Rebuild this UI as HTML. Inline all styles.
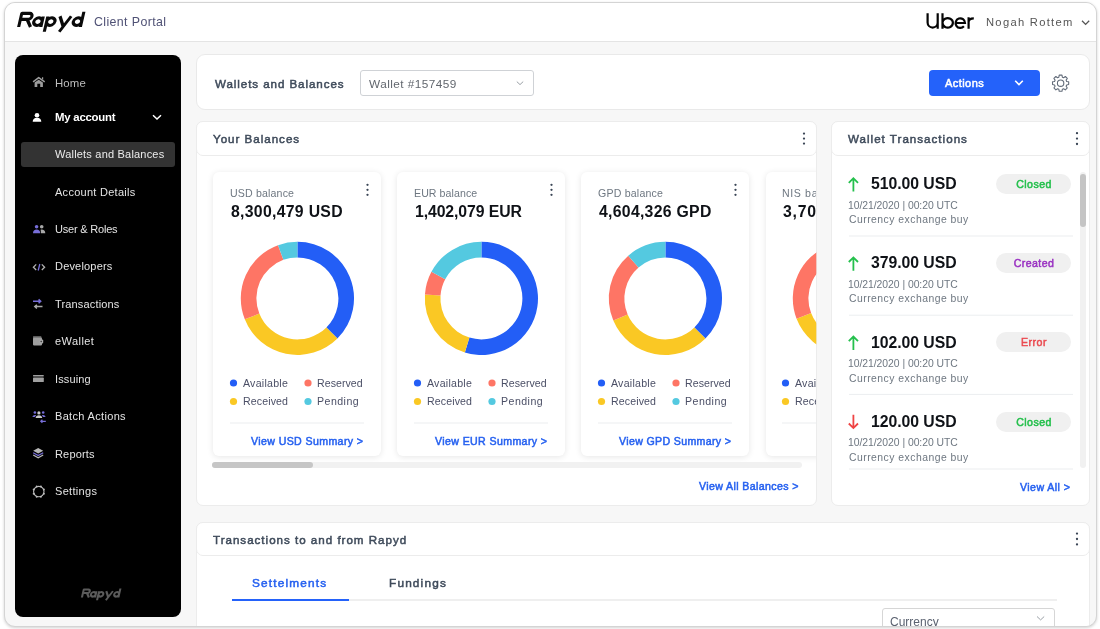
<!DOCTYPE html>
<html><head><meta charset="utf-8">
<style>
html,body{margin:0;padding:0;width:1100px;height:629px;overflow:hidden;background:#fff;font-family:"Liberation Sans",sans-serif}
.frame{position:absolute;left:4px;top:2px;width:1091px;height:623px;border:1px solid #d4d4d4;border-radius:11px;box-shadow:0 1px 3px rgba(0,0,0,.18);overflow:hidden;background:#f7f7f7}
.inner{position:absolute;left:-5px;top:-3px;width:1100px;height:629px}
.t{position:absolute;white-space:nowrap;line-height:1;will-change:transform}
.b{position:absolute;box-sizing:border-box}
svg{position:absolute;left:0;top:0;overflow:visible}
</style></head><body>
<div class="frame"><div class="inner">
<!-- header -->
<div class="b" style="left:0;top:0;width:1100px;height:42px;background:#fff;border-bottom:1px solid #e4e4e4"></div>
<!-- sidebar -->
<div class="b" style="left:15.2px;top:55.2px;width:166.2px;height:561.8px;background:#000;border-radius:8px"></div>
<div class="b" style="left:21px;top:142px;width:154px;height:25px;background:#333;border-radius:3px"></div>
<!-- wallets bar -->
<div class="b" style="left:196px;top:54px;width:894px;height:56px;background:#fff;border:1px solid #e9e9e9;border-radius:9px"></div>
<div class="b" style="left:360px;top:70px;width:174px;height:26px;background:#fff;border:1px solid #cfd2d6;border-radius:3px"></div>
<div class="b" style="left:929px;top:70px;width:111px;height:26px;background:#2462fa;border-radius:4px"></div>
<!-- your balances -->
<div class="b" style="left:196px;top:121px;width:621px;height:385px;background:#fff;border:1px solid #ececec;border-radius:7px"></div>
<div class="b" style="left:196px;top:121px;width:621px;height:35px;background:#fff;border:1px solid #ececec;border-radius:7px"></div>
<!-- balance cards clip -->
<div class="b" style="left:197px;top:160px;width:619px;height:320px;overflow:hidden">
  <div class="b" style="left:15.5px;top:12px;width:168px;height:283.6px;background:#fff;border-radius:6px;box-shadow:0 1px 6px rgba(0,0,0,.1)"></div>
  <div class="b" style="left:199.9px;top:12px;width:168px;height:283.6px;background:#fff;border-radius:6px;box-shadow:0 1px 6px rgba(0,0,0,.1)"></div>
  <div class="b" style="left:384.3px;top:12px;width:168px;height:283.6px;background:#fff;border-radius:6px;box-shadow:0 1px 6px rgba(0,0,0,.1)"></div>
  <div class="b" style="left:568.7px;top:12px;width:168px;height:283.6px;background:#fff;border-radius:6px;box-shadow:0 1px 6px rgba(0,0,0,.1)"></div>
</div>
<div class="b" style="left:212px;top:462px;width:590px;height:6px;background:#f1f1f1;border-radius:3px"></div>
<div class="b" style="left:212px;top:462px;width:100.5px;height:6px;background:#c6c6c6;border-radius:3px"></div>
<!-- wallet transactions -->
<div class="b" style="left:831px;top:121px;width:259px;height:385px;background:#fff;border:1px solid #ececec;border-radius:7px"></div>
<div class="b" style="left:831px;top:121px;width:259px;height:35px;background:#fff;border:1px solid #ececec;border-radius:7px"></div>
<div class="b" style="left:1079.8px;top:172px;width:6px;height:296px;background:#f1f1f1;border-radius:3px"></div>
<div class="b" style="left:1079.8px;top:173.5px;width:6px;height:53px;background:#c4c4c4;border-radius:3px"></div>
<div class="b" style="left:996px;top:174px;width:75px;height:20px;background:#f0f0f0;border-radius:10px"></div>
<div class="b" style="left:996px;top:253.2px;width:75px;height:20px;background:#f0f0f0;border-radius:10px"></div>
<div class="b" style="left:996px;top:332.4px;width:75px;height:20px;background:#f0f0f0;border-radius:10px"></div>
<div class="b" style="left:996px;top:411.6px;width:75px;height:20px;background:#f0f0f0;border-radius:10px"></div>
<!-- bottom panel -->
<div class="b" style="left:196px;top:522px;width:894px;height:120px;background:#fff;border:1px solid #ececec;border-radius:7px"></div>
<div class="b" style="left:196px;top:522px;width:894px;height:34px;background:#fff;border:1px solid #ececec;border-radius:7px"></div>
<div class="b" style="left:232px;top:599px;width:825px;height:2px;background:#efefef"></div>
<div class="b" style="left:232px;top:598.6px;width:117px;height:2.4px;background:#2462fa"></div>
<div class="b" style="left:882px;top:608px;width:173px;height:30px;background:#fff;border:1px solid #d6d6d6;border-radius:3px"></div>

<svg width="1100" height="629" viewBox="0 0 1100 629"><defs><clipPath id="nisclip"><rect x="0" y="0" width="816.3" height="629"/></clipPath></defs>
<path d="M297.40 241.80A56.6 56.6 0 0 1 337.42 338.42L326.39 327.39A41.0 41.0 0 0 0 297.40 257.40Z" fill="#235ef6"/><path d="M337.42 338.42A56.6 56.6 0 0 1 244.81 319.33L259.31 313.56A41.0 41.0 0 0 0 326.39 327.39Z" fill="#fac824"/><path d="M244.81 319.33A56.6 56.6 0 0 1 278.04 245.21L283.38 259.87A41.0 41.0 0 0 0 259.31 313.56Z" fill="#fe7565"/><path d="M278.04 245.21A56.6 56.6 0 0 1 297.40 241.80L297.40 257.40A41.0 41.0 0 0 0 283.38 259.87Z" fill="#54c9e0"/><path d="M481.40 241.80A56.6 56.6 0 1 1 464.85 352.53L469.41 337.61A41.0 41.0 0 1 0 481.40 257.40Z" fill="#235ef6"/><path d="M464.85 352.53A56.6 56.6 0 0 1 424.94 294.45L440.50 295.54A41.0 41.0 0 0 0 469.41 337.61Z" fill="#fac824"/><path d="M424.94 294.45A56.6 56.6 0 0 1 431.43 271.83L445.20 279.15A41.0 41.0 0 0 0 440.50 295.54Z" fill="#fe7565"/><path d="M431.43 271.83A56.6 56.6 0 0 1 481.40 241.80L481.40 257.40A41.0 41.0 0 0 0 445.20 279.15Z" fill="#54c9e0"/><path d="M665.40 241.80A56.6 56.6 0 0 1 705.42 338.42L694.39 327.39A41.0 41.0 0 0 0 665.40 257.40Z" fill="#235ef6"/><path d="M705.42 338.42A56.6 56.6 0 0 1 613.30 320.52L627.66 314.42A41.0 41.0 0 0 0 694.39 327.39Z" fill="#fac824"/><path d="M613.30 320.52A56.6 56.6 0 0 1 628.27 255.68L638.50 267.46A41.0 41.0 0 0 0 627.66 314.42Z" fill="#fe7565"/><path d="M628.27 255.68A56.6 56.6 0 0 1 665.40 241.80L665.40 257.40A41.0 41.0 0 0 0 638.50 267.46Z" fill="#54c9e0"/><g clip-path="url(#nisclip)"><path d="M849.40 241.80A56.6 56.6 0 0 1 889.42 338.42L878.39 327.39A41.0 41.0 0 0 0 849.40 257.40Z" fill="#235ef6"/><path d="M889.42 338.42A56.6 56.6 0 0 1 796.56 318.68L811.12 313.09A41.0 41.0 0 0 0 878.39 327.39Z" fill="#fac824"/><path d="M796.56 318.68A56.6 56.6 0 0 1 830.04 245.21L835.38 259.87A41.0 41.0 0 0 0 811.12 313.09Z" fill="#fe7565"/><path d="M830.04 245.21A56.6 56.6 0 0 1 849.40 241.80L849.40 257.40A41.0 41.0 0 0 0 835.38 259.87Z" fill="#54c9e0"/><circle cx="785.50" cy="383" r="3.6" fill="#235ef6"/><circle cx="860.00" cy="383" r="3.6" fill="#fe7565"/><circle cx="785.50" cy="401.5" r="3.6" fill="#fac824"/><circle cx="860.00" cy="401.5" r="3.6" fill="#54c9e0"/><rect x="782" y="422.5" width="134" height="1" fill="#eceef0"/></g>
<!-- separators -->
<g fill="#eceef0">
<rect x="230" y="422.5" width="134" height="1"/><rect x="414" y="422.5" width="134" height="1"/><rect x="598" y="422.5" width="134" height="1"/>
<rect x="849" y="235.5" width="224" height="1"/><rect x="849" y="314.7" width="224" height="1"/><rect x="849" y="393.9" width="224" height="1"/><rect x="849" y="468.5" width="224" height="1"/>
</g>
<!-- legend dots -->
<g>
<circle cx="233.50" cy="383" r="3.6" fill="#235ef6"/><circle cx="308.00" cy="383" r="3.6" fill="#fe7565"/><circle cx="233.50" cy="401.5" r="3.6" fill="#fac824"/><circle cx="308.00" cy="401.5" r="3.6" fill="#54c9e0"/><circle cx="417.50" cy="383" r="3.6" fill="#235ef6"/><circle cx="492.00" cy="383" r="3.6" fill="#fe7565"/><circle cx="417.50" cy="401.5" r="3.6" fill="#fac824"/><circle cx="492.00" cy="401.5" r="3.6" fill="#54c9e0"/><circle cx="601.50" cy="383" r="3.6" fill="#235ef6"/><circle cx="676.00" cy="383" r="3.6" fill="#fe7565"/><circle cx="601.50" cy="401.5" r="3.6" fill="#fac824"/><circle cx="676.00" cy="401.5" r="3.6" fill="#54c9e0"/>
</g>
<!-- kebabs -->
<g fill="#3b4656">
<circle cx="367.5" cy="184.80" r="1.15"/><circle cx="367.5" cy="189.80" r="1.15"/><circle cx="367.5" cy="194.80" r="1.15"/><circle cx="551.5" cy="184.80" r="1.15"/><circle cx="551.5" cy="189.80" r="1.15"/><circle cx="551.5" cy="194.80" r="1.15"/><circle cx="735.5" cy="184.80" r="1.15"/><circle cx="735.5" cy="189.80" r="1.15"/><circle cx="735.5" cy="194.80" r="1.15"/><circle cx="804" cy="133.60" r="1.15"/><circle cx="804" cy="138.60" r="1.15"/><circle cx="804" cy="143.60" r="1.15"/><circle cx="1077" cy="133.20" r="1.15"/><circle cx="1077" cy="138.60" r="1.15"/><circle cx="1077" cy="144.00" r="1.15"/><circle cx="1077" cy="533.60" r="1.15"/><circle cx="1077" cy="539.00" r="1.15"/><circle cx="1077" cy="544.40" r="1.15"/>
</g>
<!-- header chevron -->
<path d="M1082 20.8l3.6 3.6 3.6-3.6" fill="none" stroke="#555" stroke-width="1.3"/>
<!-- sidebar chevron -->
<path d="M153 115.2l4 3.8 4-3.8" fill="none" stroke="#fff" stroke-width="1.5"/>
<!-- select chevron -->
<path d="M516.8 81.6l3.2 3 3.2-3" fill="none" stroke="#9aa0a6" stroke-width="1"/>
<!-- actions chevron -->
<path d="M1015.2 80.8l3.8 3.8 3.8-3.8" fill="none" stroke="#fff" stroke-width="1.6"/>
<!-- currency chevron -->
<path d="M1037 616.5l3.6 3.4 3.6-3.4" fill="none" stroke="#9aa0a6" stroke-width="1"/>
<!-- gear -->
<g transform="translate(1060.6 83.2)" fill="none" stroke="#636c7a" stroke-width="1.1" stroke-linejoin="round">
<path d="M-1.76 -6.05L-1.38 -8.08L1.38 -8.08L1.76 -6.05L3.04 -5.52L4.74 -6.69L6.69 -4.74L5.52 -3.04L6.05 -1.76L8.08 -1.38L8.08 1.38L6.05 1.76L5.52 3.04L6.69 4.74L4.74 6.69L3.04 5.52L1.76 6.05L1.38 8.08L-1.38 8.08L-1.76 6.05L-3.04 5.52L-4.74 6.69L-6.69 4.74L-5.52 3.04L-6.05 1.76L-8.08 1.38L-8.08 -1.38L-6.05 -1.76L-5.52 -3.04L-6.69 -4.74L-4.74 -6.69L-3.04 -5.52Z"/>
<circle r="3.2"/>
</g>
<!-- tx arrows -->
<g fill="none" stroke-width="1.8" stroke-linecap="butt">
<path d="M853.4 191.5V178.2M848.8 182.8l4.6-4.6 4.6 4.6" stroke="#25c04d"/>
<path d="M853.4 270.7V257.4M848.8 262l4.6-4.6 4.6 4.6" stroke="#25c04d"/>
<path d="M853.4 349.9V336.6M848.8 341.2l4.6-4.6 4.6 4.6" stroke="#25c04d"/>
<path d="M853.4 414.8V428.1M848.8 423.5l4.6 4.6 4.6-4.6" stroke="#ef4444"/>
</g>
<!-- sidebar icons -->
<!-- home -->
<path d="M33.1 81.8L38.7 77.6L44.7 81.8" fill="none" stroke="#9c9c9c" stroke-width="1.5" stroke-linejoin="round"/><path d="M42 77.2h1.2v2.6l-1.2-.9z" fill="#9c9c9c"/><path d="M34.6 87.1V82.6L38.7 79.7L42.9 82.6V87.1H40.2V83.8H37.3V87.1Z" fill="#9c9c9c"/>
<!-- person -->
<circle cx="37" cy="115.3" r="2.3" fill="#fff"/>
<path d="M32.7 121.8c0-2.6 1.8-4 4.3-4s4.3 1.4 4.3 4z" fill="#fff"/>
<!-- users -->
<circle cx="36.6" cy="226.8" r="1.8" fill="#776ed8"/>
<path d="M33 233.2c0-2.4 1.5-3.6 3.6-3.6s3.6 1.2 3.6 3.6z" fill="#776ed8"/>
<circle cx="41.7" cy="226.8" r="1.8" fill="#a8a8a8"/>
<path d="M40.6 229.8c.4-.1.7-.2 1.1-.2 2.1 0 3.6 1.2 3.6 3.6h-4.4c0-1.4-.1-2.5-.3-3.4z" fill="#a8a8a8"/>
<!-- developers -->
<path d="M36.2 264.4l-2.8 2.8 2.8 2.8M41.8 264.4l2.8 2.8-2.8 2.8" fill="none" stroke="#b0b0b0" stroke-width="1.3"/>
<path d="M39.8 264l-1.6 6.5" fill="none" stroke="#776ed8" stroke-width="1.3"/>
<!-- transactions -->
<path d="M33 301.3h7.5M38.6 299.4l2.1 1.9-2.1 1.9" fill="none" stroke="#776ed8" stroke-width="1.5"/>
<path d="M42.5 306.6H35M36.9 304.7l-2.1 1.9 2.1 1.9" fill="none" stroke="#a8a8a8" stroke-width="1.5"/>
<!-- ewallet -->
<rect x="33" y="336.2" width="8.4" height="1.6" rx=".5" fill="#7a7a7a"/>
<rect x="33" y="337.6" width="9" height="7.8" rx=".8" fill="#9e9e9e"/>
<rect x="39.6" y="339.6" width="3.6" height="4" rx="1" fill="#a8a8a8"/>
<circle cx="41.2" cy="341.6" r=".75" fill="#333"/>
<!-- issuing -->
<rect x="33" y="375" width="10.8" height="1.4" rx=".4" fill="#a0a0a0"/>
<rect x="33" y="377.6" width="10.8" height="4.4" rx=".6" fill="#a0a0a0"/>
<!-- batch -->
<g transform="translate(0 .5)"><circle cx="34.9" cy="412" r="1.3" fill="#776ed8"/><circle cx="43.2" cy="412" r="1.3" fill="#776ed8"/><circle cx="38.9" cy="412.4" r="1.6" fill="#c8c8c8"/>
<path d="M32.4 416.6c.3-1.3 1.3-2 2.5-2 .5 0 .9.1 1.2.3-.6.4-1 1-1.1 1.7z" fill="#776ed8"/>
<path d="M45.6 416.6c-.3-1.3-1.3-2-2.5-2-.5 0-.9.1-1.2.3.6.4 1 1 1.1 1.7z" fill="#776ed8"/>
<path d="M35.6 417.6c0-1.8 1.5-2.9 3.3-2.9s3.3 1.1 3.3 2.9z" fill="#c8c8c8"/>
<path d="M45.8 420.8h-5M42.4 419.3l-1.6 1.5 1.6 1.5" fill="none" stroke="#776ed8" stroke-width="1.2"/>
</g>
<!-- reports -->
<path d="M38.2 448l5 2.8-5 2.8-5-2.8z" fill="#b8b8b8"/>
<path d="M33.2 452.8l5 2.8 5-2.8" fill="none" stroke="#776ed8" stroke-width="1.2"/>
<path d="M33.2 455l5 2.8 5-2.8" fill="none" stroke="#b8b8b8" stroke-width="1.2"/>
<!-- settings -->
<circle cx="38.8" cy="491.6" r="5.2" fill="none" stroke="#bdbdbd" stroke-width="1.1"/><circle cx="40.90" cy="486.52" r="1" fill="#bdbdbd"/><circle cx="43.88" cy="489.50" r="1" fill="#bdbdbd"/><circle cx="43.88" cy="493.70" r="1" fill="#bdbdbd"/><circle cx="40.90" cy="496.68" r="1" fill="#bdbdbd"/><circle cx="36.70" cy="496.68" r="1" fill="#bdbdbd"/><circle cx="33.72" cy="493.70" r="1" fill="#bdbdbd"/><circle cx="33.72" cy="489.50" r="1" fill="#bdbdbd"/><circle cx="36.70" cy="486.52" r="1" fill="#bdbdbd"/>
</svg>

<div class="t" style="left:94.00px;top:16px;font-size:12.4px;color:#4f5175;letter-spacing:0.375px;">Client Portal</div>
<div class="t" style="left:985.80px;top:17px;font-size:11.2px;color:#555555;letter-spacing:1.287px;">Nogah Rottem</div>
<div class="t" style="left:55.40px;top:78px;font-size:11.4px;color:#bdbdbd;letter-spacing:0.136px;">Home</div>
<div class="t" style="left:55.40px;top:112px;font-size:11.4px;color:#ffffff;font-weight:700;letter-spacing:-0.230px;">My account</div>
<div class="t" style="left:55.40px;top:149px;font-size:11.0px;color:#ececec;letter-spacing:0.201px;">Wallets and Balances</div>
<div class="t" style="left:55.40px;top:187px;font-size:11.0px;color:#e4e4e4;letter-spacing:0.276px;">Account Details</div>
<div class="t" style="left:55.40px;top:224px;font-size:11.0px;color:#e4e4e4;letter-spacing:-0.200px;">User &amp; Roles</div>
<div class="t" style="left:55.40px;top:261px;font-size:11.0px;color:#e4e4e4;letter-spacing:0.184px;">Developers</div>
<div class="t" style="left:55.40px;top:299px;font-size:11.0px;color:#e4e4e4;letter-spacing:0.158px;">Transactions</div>
<div class="t" style="left:55.40px;top:336px;font-size:11.0px;color:#e4e4e4;letter-spacing:0.436px;">eWallet</div>
<div class="t" style="left:55.40px;top:374px;font-size:11.0px;color:#e4e4e4;letter-spacing:0.123px;">Issuing</div>
<div class="t" style="left:55.40px;top:411px;font-size:11.0px;color:#e4e4e4;letter-spacing:0.329px;">Batch Actions</div>
<div class="t" style="left:55.40px;top:449px;font-size:11.0px;color:#e4e4e4;letter-spacing:0.161px;">Reports</div>
<div class="t" style="left:55.40px;top:486px;font-size:11.0px;color:#e4e4e4;letter-spacing:0.307px;">Settings</div>
<div class="t" style="left:214.90px;top:78px;font-size:11.6px;color:#3f4b5b;-webkit-text-stroke:0.5px #3f4b5b;letter-spacing:0.923px;">Wallets and Balances</div>
<div class="t" style="left:368.60px;top:79px;font-size:11.8px;color:#62676e;letter-spacing:0.435px;">Wallet #157459</div>
<div class="t" style="left:945.30px;top:78px;font-size:11.0px;color:#ffffff;-webkit-text-stroke:0.5px #ffffff;letter-spacing:0.437px;">Actions</div>
<div class="t" style="left:213.10px;top:133px;font-size:11.6px;color:#3f4b5b;-webkit-text-stroke:0.5px #3f4b5b;letter-spacing:0.980px;">Your Balances</div>
<div class="t" style="left:848.30px;top:133px;font-size:11.6px;color:#3f4b5b;-webkit-text-stroke:0.5px #3f4b5b;letter-spacing:1.009px;">Wallet Transactions</div>
<div class="t" style="left:230.40px;top:188px;font-size:10.6px;color:#6e7781;letter-spacing:0.158px;">USD balance</div>
<div class="t" style="left:230.50px;top:204px;font-size:15.8px;color:#0f1217;font-weight:700;letter-spacing:0.297px;">8,300,479 USD</div>
<div class="t" style="left:243.00px;top:378px;font-size:10.6px;color:#4b4f66;letter-spacing:0.248px;">Available</div>
<div class="t" style="left:317.30px;top:378px;font-size:10.6px;color:#4b4f66;letter-spacing:0.051px;">Reserved</div>
<div class="t" style="left:243.00px;top:396px;font-size:10.6px;color:#4b4f66;letter-spacing:0.118px;">Received</div>
<div class="t" style="left:317.30px;top:396px;font-size:10.6px;color:#4b4f66;letter-spacing:0.468px;">Pending</div>
<div class="t" style="left:251.00px;top:436px;font-size:10.6px;color:#2661f0;-webkit-text-stroke:0.5px #2661f0;letter-spacing:0.383px;">View USD Summary &gt;</div>
<div class="t" style="left:414.40px;top:188px;font-size:10.6px;color:#6e7781;letter-spacing:0.078px;">EUR balance</div>
<div class="t" style="left:414.50px;top:204px;font-size:15.8px;color:#0f1217;font-weight:700;letter-spacing:-0.094px;">1,402,079 EUR</div>
<div class="t" style="left:427.00px;top:378px;font-size:10.6px;color:#4b4f66;letter-spacing:0.248px;">Available</div>
<div class="t" style="left:501.30px;top:378px;font-size:10.6px;color:#4b4f66;letter-spacing:0.051px;">Reserved</div>
<div class="t" style="left:427.00px;top:396px;font-size:10.6px;color:#4b4f66;letter-spacing:0.118px;">Received</div>
<div class="t" style="left:501.30px;top:396px;font-size:10.6px;color:#4b4f66;letter-spacing:0.468px;">Pending</div>
<div class="t" style="left:435.00px;top:436px;font-size:10.6px;color:#2661f0;-webkit-text-stroke:0.5px #2661f0;letter-spacing:0.383px;">View EUR Summary &gt;</div>
<div class="t" style="left:598.40px;top:188px;font-size:10.6px;color:#6e7781;letter-spacing:0.198px;">GPD balance</div>
<div class="t" style="left:598.50px;top:204px;font-size:15.8px;color:#0f1217;font-weight:700;letter-spacing:0.283px;">4,604,326 GPD</div>
<div class="t" style="left:611.00px;top:378px;font-size:10.6px;color:#4b4f66;letter-spacing:0.248px;">Available</div>
<div class="t" style="left:685.30px;top:378px;font-size:10.6px;color:#4b4f66;letter-spacing:0.051px;">Reserved</div>
<div class="t" style="left:611.00px;top:396px;font-size:10.6px;color:#4b4f66;letter-spacing:0.118px;">Received</div>
<div class="t" style="left:685.30px;top:396px;font-size:10.6px;color:#4b4f66;letter-spacing:0.468px;">Pending</div>
<div class="t" style="left:618.50px;top:436px;font-size:10.6px;color:#2661f0;-webkit-text-stroke:0.5px #2661f0;letter-spacing:0.348px;">View GPD Summary &gt;</div>
<div class="t" style="left:698.80px;top:481px;font-size:10.6px;color:#2661f0;-webkit-text-stroke:0.5px #2661f0;letter-spacing:0.385px;">View All Balances &gt;</div>
<div class="t" style="left:870.90px;top:176px;font-size:15.8px;color:#0f1217;font-weight:700;letter-spacing:-0.051px;">510.00 USD</div>
<div class="t" style="left:848.30px;top:201px;font-size:10.4px;color:#6e7781;letter-spacing:-0.044px;">10/21/2020 | 00:20 UTC</div>
<div class="t" style="left:848.70px;top:215px;font-size:10.4px;color:#6e7781;letter-spacing:0.477px;">Currency exchange buy</div>
<div class="t" style="left:1033.50px;top:179px;font-size:10.6px;color:#22bf4a;-webkit-text-stroke:0.5px #22bf4a;letter-spacing:0.443px;transform:translateX(-50%);">Closed</div>
<div class="t" style="left:870.90px;top:255px;font-size:15.8px;color:#0f1217;font-weight:700;letter-spacing:-0.051px;">379.00 USD</div>
<div class="t" style="left:848.30px;top:280px;font-size:10.4px;color:#6e7781;letter-spacing:-0.044px;">10/21/2020 | 00:20 UTC</div>
<div class="t" style="left:848.70px;top:294px;font-size:10.4px;color:#6e7781;letter-spacing:0.477px;">Currency exchange buy</div>
<div class="t" style="left:1033.50px;top:258px;font-size:10.6px;color:#9a32c2;-webkit-text-stroke:0.5px #9a32c2;letter-spacing:0.433px;transform:translateX(-50%);">Created</div>
<div class="t" style="left:870.90px;top:335px;font-size:15.8px;color:#0f1217;font-weight:700;letter-spacing:-0.051px;">102.00 USD</div>
<div class="t" style="left:848.30px;top:359px;font-size:10.4px;color:#6e7781;letter-spacing:-0.044px;">10/21/2020 | 00:20 UTC</div>
<div class="t" style="left:848.70px;top:374px;font-size:10.4px;color:#6e7781;letter-spacing:0.477px;">Currency exchange buy</div>
<div class="t" style="left:1033.50px;top:337px;font-size:10.6px;color:#ea4a50;-webkit-text-stroke:0.5px #ea4a50;letter-spacing:0.513px;transform:translateX(-50%);">Error</div>
<div class="t" style="left:870.90px;top:414px;font-size:15.8px;color:#0f1217;font-weight:700;letter-spacing:-0.051px;">120.00 USD</div>
<div class="t" style="left:848.30px;top:438px;font-size:10.4px;color:#6e7781;letter-spacing:-0.044px;">10/21/2020 | 00:20 UTC</div>
<div class="t" style="left:848.70px;top:453px;font-size:10.4px;color:#6e7781;letter-spacing:0.477px;">Currency exchange buy</div>
<div class="t" style="left:1033.50px;top:417px;font-size:10.6px;color:#22bf4a;-webkit-text-stroke:0.5px #22bf4a;letter-spacing:0.443px;transform:translateX(-50%);">Closed</div>
<div class="t" style="left:1020.00px;top:482px;font-size:10.6px;color:#2661f0;-webkit-text-stroke:0.5px #2661f0;letter-spacing:0.439px;">View All &gt;</div>
<div class="t" style="left:213.00px;top:534px;font-size:11.6px;color:#3f4b5b;-webkit-text-stroke:0.5px #3f4b5b;letter-spacing:0.988px;">Transactions to and from Rapyd</div>
<div class="t" style="left:251.90px;top:578px;font-size:11.8px;color:#2661f0;-webkit-text-stroke:0.5px #2661f0;letter-spacing:1.180px;">Settelments</div>
<div class="t" style="left:388.70px;top:578px;font-size:11.8px;color:#3f4b5b;-webkit-text-stroke:0.5px #3f4b5b;letter-spacing:1.181px;">Fundings</div>
<div class="t" style="left:890.00px;top:616px;font-size:12.0px;color:#5b6270;">Currency</div><div style="position:absolute;left:0;top:0;width:816.3px;height:629px;overflow:hidden"><div class="t" style="left:782.40px;top:188px;font-size:10.6px;color:#6e7781;letter-spacing:0.628px;">NIS balance</div>
<div class="t" style="left:782.50px;top:204px;font-size:15.8px;color:#0f1217;font-weight:700;letter-spacing:0.750px;">3,705,120 NIS</div>
<div class="t" style="left:795.00px;top:378px;font-size:10.6px;color:#4b4f66;letter-spacing:0.248px;">Available</div>
<div class="t" style="left:869.30px;top:378px;font-size:10.6px;color:#4b4f66;letter-spacing:0.051px;">Reserved</div>
<div class="t" style="left:795.00px;top:396px;font-size:10.6px;color:#4b4f66;letter-spacing:0.118px;">Received</div>
<div class="t" style="left:869.30px;top:396px;font-size:10.6px;color:#4b4f66;letter-spacing:0.468px;">Pending</div></div>

<!-- logos -->
<svg width="1100" height="629" viewBox="0 0 1100 629">
<defs>
<g id="rapyd" fill="none" stroke-linejoin="round">
<path d="M1.55 0V-13.65H9.4a3 3 0 0 1 0 6H1.55M8.3 -7.65L13.4 0"/>
<path d="M23.75 -10.5V0M23.75 -5.4a4.15 3.85 0 1 1 0-.01"/>
<path d="M28.3 -10.5V4.8M28.3 -5.4a4.15 3.85 0 1 0 0-.01"/>
<path d="M40.4 -10.8L45.6 -1.2M51.6 -10.8L43.2 4.8"/>
<path d="M63.3 -15.2V0M63.3 -5.4a4.15 3.85 0 1 1 0-.01"/>
</g>
</defs>
<use href="#rapyd" transform="translate(17.1 27) skewX(-13)" stroke="#0a0a0a" stroke-width="3.1"/>
<use href="#rapyd" transform="translate(81 597.5) scale(0.59) skewX(-13)" stroke="#5b5b5b" stroke-width="3.5"/>
<g fill="none" stroke="#050505" stroke-width="2.2">
<path d="M927.6 13.2V22.5a5.05 5.05 0 0 0 10.1 0V13.2M937.7 22V28.7"/>
<path d="M942.5 13.2V28.7M942.5 22.85a5.2 4.75 0 1 0 0 -.01"/>
<path d="M955.6 23H965A4.7 4.8 0 1 0 963.9 26.2"/>
<path d="M968.6 17.3V28.7M968.6 22.2C968.6 19.4 970.3 18.3 973.8 18.3"/>
</g>
</svg>
</div></div>
</body></html>
